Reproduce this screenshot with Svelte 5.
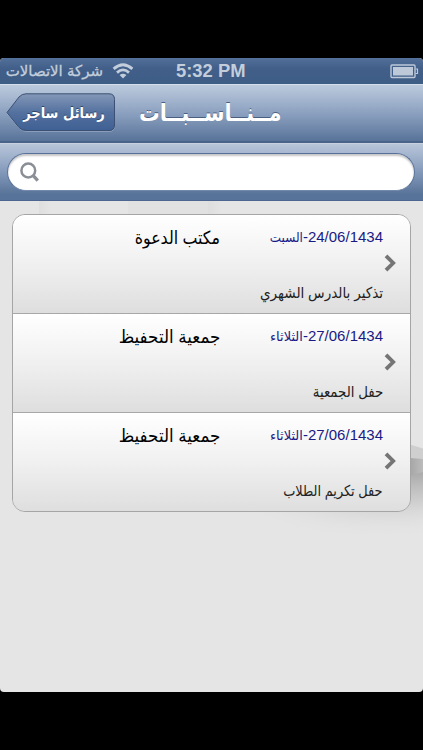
<script lang="ts">
  type Occasion = {
    date: string;
    day: string;
    host: string;
    details: string;
    // horizontal condensing of each label: day, host, details
    squeeze: [number, number, number];
  };

  const occasions: Occasion[] = [
    {
      date: '24/06/1434',
      day: 'السبت',
      host: 'مكتب الدعوة',
      details: 'تذكير بالدرس الشهري',
      squeeze: [0.92, 0.88, 0.905],
    },
    {
      date: '27/06/1434',
      day: 'الثلاثاء',
      host: 'جمعية التحفيظ',
      details: 'حفل الجمعية',
      squeeze: [1, 0.93, 0.89],
    },
    {
      date: '27/06/1434',
      day: 'الثلاثاء',
      host: 'جمعية التحفيظ',
      details: 'حفل تكريم الطلاب',
      squeeze: [1, 0.93, 0.86],
    },
  ];

  let query = $state('');
</script>

<div class="device">
  <div class="screen">
    <div class="status-bar">
      <div class="carrier">
        <span class="carrier-name" dir="rtl">شركة الاتصالات</span>
        <svg class="wifi" width="22" height="16" viewBox="0 0 22 16">
          <g fill="none" stroke="#c3cedc" stroke-width="2.8">
            <path d="M1.6 5.9Q11 -2.3 20.4 5.9" />
            <path d="M5 9.6Q11 4.2 17 9.6" />
          </g>
          <path d="M7.6 12.1Q11 9.2 14.4 12.1L11 15.5Z" fill="#c3cedc" />
        </svg>
      </div>
      <span class="clock">5:32 PM</span>
      <svg class="battery" width="29" height="15" viewBox="0 0 29 15">
        <rect x="1" y="1" width="24" height="12.5" rx="1" fill="none" stroke="#bdc9d9" stroke-width="1.4" />
        <rect x="3" y="3" width="20" height="8.5" fill="#bdc9d9" />
        <path d="M25.5 5H27.5V9.5H25.5" fill="none" stroke="#bdc9d9" stroke-width="1.2" />
      </svg>
    </div>

    <div class="nav-bar">
      <button class="back" aria-label="رسائل ساجر">
        <svg class="back-shape" width="110" height="40" viewBox="0 0 110 40">
          <defs>
            <linearGradient id="back-fill" x1="0" y1="0" x2="0" y2="1">
              <stop offset="0" stop-color="#8498b8" />
              <stop offset="0.5" stop-color="#54719f" />
              <stop offset="1" stop-color="#3f6094" />
            </linearGradient>
          </defs>
          <path d="M1 20.5L13 5Q16 1.5 20 1.5H103Q108.5 1.5 108.5 7V33Q108.5 38.5 103 38.5H20Q16 38.5 13 35Z" fill="none" stroke="#a9bad2" stroke-opacity=".5" />
          <path d="M1 19.5L13 4Q16 .8 20 .8H103Q108.5 .8 108.5 6.5V32Q108.5 37.5 103 37.5H20Q16 37.5 13 34.5Z" fill="url(#back-fill)" stroke="#3b5072" />
        </svg>
        <span class="back-label" dir="rtl">رسائل ساجر</span>
      </button>
      <h1 class="title" dir="rtl">مــنــاســبــات</h1>
    </div>

    <div class="search-bar">
      <label class="search-field">
        <svg width="20" height="21" viewBox="0 0 20 21" fill="none" stroke="#8a8e96">
          <circle cx="8.3" cy="8.5" r="6.9" stroke-width="2.5" />
          <path d="M13 13.4L17.8 18.6" stroke-width="3.2" />
        </svg>
        <input type="text" dir="rtl" aria-label="بحث" bind:value={query} />
      </label>
    </div>

    <div class="content">
      <svg class="backdrop" width="423" height="491" viewBox="0 0 423 491">
        <defs>
          <linearGradient id="fold" x1="0" y1="0" x2="1" y2="0">
            <stop offset="0" stop-color="#dedede" />
            <stop offset="1" stop-color="#e5e5e5" />
          </linearGradient>
          <linearGradient id="flap" x1="0" y1="0" x2="1" y2="0">
            <stop offset="0" stop-color="#a6a6a6" />
            <stop offset="1" stop-color="#bcbcbc" />
          </linearGradient>
          <radialGradient id="paper-shadow">
            <stop offset="0" stop-color="#a8a8a8" />
            <stop offset="0.45" stop-color="#c6c6c6" stop-opacity=".75" />
            <stop offset="1" stop-color="#e5e5e5" stop-opacity="0" />
          </radialGradient>
          <clipPath id="below-flap">
            <rect x="0" y="270" width="423" height="120" />
          </clipPath>
        </defs>
        <rect x="39" y="0" width="12" height="14" fill="url(#fold)" />
        <rect x="128" y="0" width="80" height="14" fill="#e1e1e1" />
        <rect x="208" y="0" width="14" height="14" fill="url(#fold)" />
        <g clip-path="url(#below-flap)">
          <ellipse cx="418" cy="270" rx="190" ry="66" fill="url(#paper-shadow)" transform="rotate(-6 418 270)" />
        </g>
        <path d="M410 243.5L423 247.5V259H410Z" fill="#cfcfcf" />
        <path d="M410 257L423 258V271L410 275Z" fill="url(#flap)" />
      </svg>

      <ul class="list">
        {#each occasions as item}
          <li class="row" dir="rtl">
            <div class="row-top">
              <span class="date"
                >{item.date}-<span class="day" style="transform: scaleX({item.squeeze[0]})">{item.day}</span></span
              >
              <span class="host" style="transform: scaleX({item.squeeze[1]})">{item.host}</span>
            </div>
            <svg class="chevron" width="12" height="18" viewBox="0 0 12 18">
              <path d="M2 1.8L9.2 9L2 16.2" fill="none" stroke="#757575" stroke-width="3.8" />
            </svg>
            <span class="details" style="transform: scaleX({item.squeeze[2]})">{item.details}</span>
          </li>
        {/each}
      </ul>
    </div>
  </div>
</div>

<style>
  :global(body) {
    margin: 0;
    background: #000;
  }

  .device {
    box-sizing: border-box;
    width: 423px;
    height: 750px;
    padding: 58px 0;
    overflow: hidden;
    background: #000;
    font-family: 'Liberation Sans', 'DejaVu Sans', sans-serif;
  }

  .screen {
    display: flex;
    flex-direction: column;
    height: 634px;
    overflow: hidden;
    border-radius: 4px;
    background: #e5e5e5;
  }

  /* Status bar */
  .status-bar {
    display: grid;
    grid-template-columns: 176px auto 1fr;
    align-items: center;
    box-sizing: border-box;
    height: 26px;
    padding: 0 4px 0 0;
    background: linear-gradient(#53709a, #415f88 40%, #3e5d86);
    color: #c3cedc;
    white-space: nowrap;
  }

  .carrier {
    display: flex;
    align-items: center;
    gap: 9px;
    padding-left: 5px;
  }

  .carrier-name {
    width: 98px;
    font-size: 15px;
    line-height: 26px;
    -webkit-text-stroke: 0.3px #c3cedc;
  }

  .clock {
    font-size: 18.4px;
    font-weight: bold;
    line-height: 26px;
  }

  .battery {
    justify-self: end;
  }

  /* Navigation bar */
  .nav-bar {
    display: flex;
    align-items: center;
    box-sizing: border-box;
    height: 59px;
    padding: 0 6px;
    border-top: 1px solid #d3deea;
    border-bottom: 2px solid #496389;
    background: linear-gradient(#bccadd, #8ca1c0 50%, #587399);
  }

  .back {
    display: grid;
    width: 110px;
    height: 40px;
    padding: 0;
    border: 0;
    background: none;
    color: #fff;
    font: bold 15px/40px 'DejaVu Sans', sans-serif;
    white-space: nowrap;
  }

  .back-shape,
  .back-label {
    grid-area: 1 / 1;
  }

  .back-label {
    justify-self: end;
    margin-right: 11px;
    text-shadow: 0 -1px 0 #2f4467;
    transform: scaleX(0.87);
    transform-origin: right;
  }

  .title {
    margin: 0 0 0 23px;
    color: #fff;
    font: bold 24px/40px 'DejaVu Sans', sans-serif;
    text-shadow: 0 -1px 0 #4a5f80;
    white-space: nowrap;
    transform: scaleX(0.86);
    transform-origin: left;
  }

  /* Search */
  .search-bar {
    box-sizing: border-box;
    height: 58px;
    padding: 9px 8px 10px 7px;
    border-top: 1px solid #c7d1e0;
    border-bottom: 1px solid #4b668f;
    background: linear-gradient(#b9c6da, #8399ba 50%, #587399 90%);
  }

  .search-field {
    display: flex;
    align-items: center;
    box-sizing: border-box;
    height: 38px;
    padding: 0 14px 0 12px;
    border: 1px solid #58719a;
    border-bottom-color: #7188aa;
    border-radius: 19px;
    background: #fff;
    box-shadow: inset 0 2px 2px #c6c6c6;
  }

  .search-field input {
    flex: 1;
    border: 0;
    outline: 0;
    background: none;
    font: inherit;
  }

  /* List */
  .content {
    position: relative;
    flex: 1;
    padding: 13px 12px 0;
  }

  .backdrop {
    position: absolute;
    top: 0;
    left: 0;
  }

  .list {
    position: relative;
    box-sizing: border-box;
    height: 298px;
    margin: 0;
    padding: 0;
    overflow: hidden;
    border: 1px solid #a5a5a5;
    border-radius: 13px;
    list-style: none;
  }

  .row {
    display: flex;
    flex-direction: column;
    align-items: flex-start;
    box-sizing: border-box;
    height: 99px;
    padding: 9px 27px 0 0;
    border-bottom: 1px solid #a8a8a8;
    background: linear-gradient(#fff, #f0f0f0 50%, #dedede);
    white-space: nowrap;
  }

  .row:last-child {
    border-bottom: 0;
  }

  .row-top {
    display: flex;
    height: 30px;
  }

  .date {
    width: 163px;
    color: #1a1a86;
    font-size: 15px;
    line-height: 26px;
  }

  .day {
    display: inline-block;
    font-size: 13px;
    transform-origin: right;
  }

  .host {
    color: #000;
    font-size: 18px;
    line-height: 29px;
    transform-origin: right;
  }

  .chevron {
    margin-right: -13px;
  }

  .details {
    margin-top: 9px;
    color: #222;
    font-size: 15px;
    line-height: 24px;
    transform-origin: right;
  }
</style>
